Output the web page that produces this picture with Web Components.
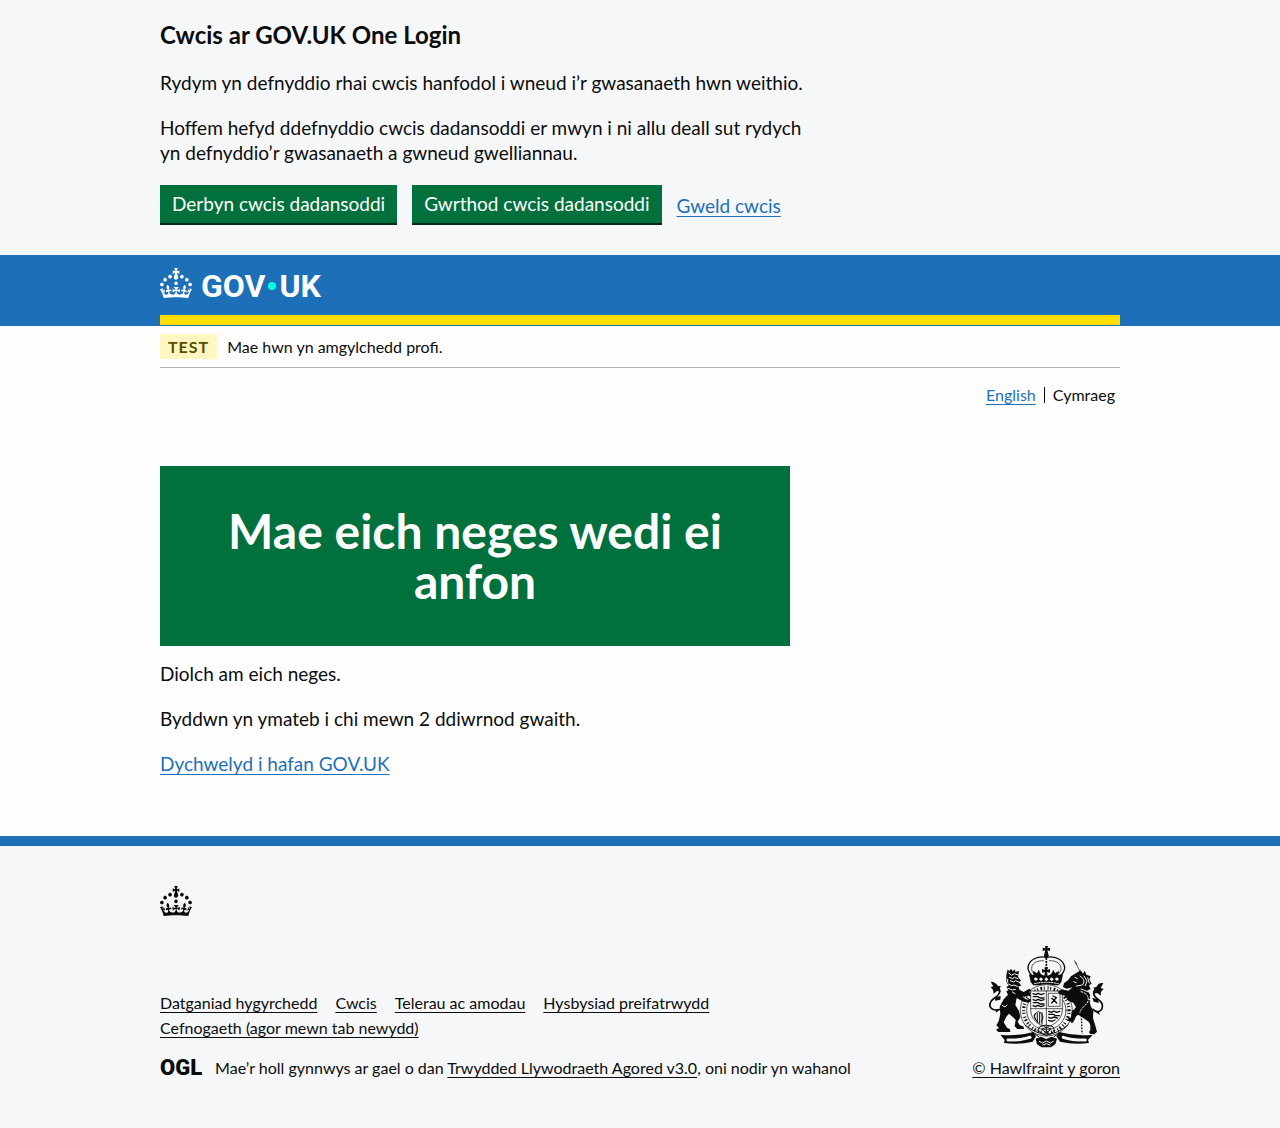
<!DOCTYPE html>
<html lang="cy">
<head>
<meta charset="utf-8">
<meta name="viewport" content="width=device-width, initial-scale=1">
<title>Mae eich neges wedi ei anfon</title>
<style>
  :root {
    --blue: #1d70b8;
    --green: #00703c;
    --ink: #0b0c0c;
    --surface: #f6f7f8;
  }
  body {
    margin: 0;
    color: var(--ink);
    background: #fefefe;
    font-family: Lato, "Liberation Sans", sans-serif;
    font-size: 19px;
    line-height: 25px;
  }
</style>
</head>
<body>
<cookie-banner></cookie-banner>
<site-header></site-header>
<page-width>
  <phase-banner tag="TEST">Mae hwn yn amgylchedd profi.</phase-banner>
  <language-select></language-select>
  <page-main>
    <confirm-panel>Mae eich neges wedi ei anfon</confirm-panel>
    <body-text>Diolch am eich neges.</body-text>
    <body-text>Byddwn yn ymateb i chi mewn 2 ddiwrnod gwaith.</body-text>
    <body-text><text-link href="#hafan">Dychwelyd i hafan GOV.UK</text-link></body-text>
  </page-main>
</page-width>
<site-footer></site-footer>

<script>
  function define(name, html) {
    const template = document.createElement('template');
    template.innerHTML = html;
    customElements.define(name, class extends HTMLElement {
      constructor() {
        super();
        this.attachShadow({ mode: 'open' }).append(template.content.cloneNode(true));
      }
      connectedCallback() {
        const link = this.shadowRoot.querySelector('a[data-link]');
        if (link) link.href = this.getAttribute('href') || '#';
        const tag = this.shadowRoot.querySelector('[data-tag]');
        if (tag) tag.textContent = this.getAttribute('tag');
      }
    });
  }

  define('page-width', `
    <style>
      :host { display: block; max-width: 960px; margin: 0 auto; }
      @media (max-width: 1020px) { :host { margin: 0 30px; } }
    </style><slot></slot>`);

  define('text-link', `
    <style>
      :host { display: inline; }
      a { color: var(--link, var(--blue)); text-decoration: underline; text-decoration-thickness: 1px; text-underline-offset: 3px; }
      a:hover { text-decoration-thickness: 3px; }
    </style><a data-link><slot></slot></a>`);

  define('body-text', `
    <style>:host { display: block; margin-bottom: 20px; }</style><slot></slot>`);

  define('action-button', `
    <style>
      :host { display: block; }
      button { display: block; font: inherit; line-height: 22px; color: #fff; background: var(--green); border: 0; border-radius: 0; padding: 8px 12px; margin: 0 0 2px; box-shadow: 0 2px 0 #002d18; cursor: pointer; }
    </style><button type="button"><slot></slot></button>`);

  define('crown-icon', `
    <style>:host { display: block; } svg { display: block; fill: currentColor; }</style>
    <svg width="32" height="30" viewBox="0 0 32 30" aria-hidden="true"><path d="M22.6 10.4c-1 .4-2-.1-2.4-1-.4-.9.1-2 1-2.4.9-.4 2 .1 2.4 1s-.1 2-1 2.4m-5.9 6.7c-.9.4-2-.1-2.4-1-.4-.9.1-2 1-2.4.9-.4 2 .1 2.4 1s-.1 2-1 2.4m10.8-3.7c-1 .4-2-.1-2.4-1-.4-.9.1-2 1-2.4.9-.4 2 .1 2.4 1s0 2-1 2.4m3.3 4.8c-1 .4-2-.1-2.4-1-.4-.9.1-2 1-2.4.9-.4 2 .1 2.4 1s-.1 2-1 2.4M17 4.7l2.3 1.2V2.5l-2.3.7-.2-.2.9-3h-3.4l.9 3-.2.2c-.1.1-2.3-.7-2.3-.7v3.4L15 4.7c.1.1.1.2.2.2l-1.3 4c-.1.2-.1.4-.1.6 0 1.1.8 2 1.9 2.2h.7c1-.2 1.9-1.1 1.9-2.1 0-.2 0-.4-.1-.6l-1.3-4c-.1-.2 0-.2.1-.3m-7.6 5.7c.9.4 2-.1 2.4-1 .4-.9-.1-2-1-2.4-.9-.4-2 .1-2.4 1s0 2 1 2.4m-5 3c.9.4 2-.1 2.4-1 .4-.9-.1-2-1-2.4-.9-.4-2 .1-2.4 1s.1 2 1 2.4m-3.2 4.8c.9.4 2-.1 2.4-1 .4-.9-.1-2-1-2.4-.9-.4-2 .1-2.4 1s0 2 1 2.4m14.8 11c4.4 0 8.6.3 12.3.8 1.1-4.5 2.4-7 3.7-8.8l-2.5-.9c.2 1.3.3 1.9 0 2.7-.4-.4-.8-1.1-1.1-2.3l-1.2 4c.7-.5 1.3-.8 2-.9-1.1 2.5-2.6 3.1-3.5 3-1.1-.2-1.7-1.2-1.5-2.1.3-1.2 1.5-1.5 2.1-.1 1.1-2.3-.8-3-2-2.3 1.9-1.9 2.1-3.5.6-5.6-2.1 1.6-2.1 3.2-1.2 5.5-1.2-1.4-3.2-.6-2.5 1.6.9-1.4 2.1-.5 1.9.8-.2 1.1-1.7 2.1-3.5 1.9-2.7-.2-2.9-2.1-2.9-3.6.7-.1 1.9.5 2.9 1.9l.4-4.3c-1.1 1.1-2.1 1.4-3.2 1.4.4-1.2 2.1-3 2.1-3h-5.4s1.7 1.9 2.1 3c-1.1 0-2.1-.2-3.2-1.4l.4 4.3c1-1.4 2.2-2 2.9-1.9-.1 1.5-.2 3.4-2.9 3.6-1.9.2-3.4-.8-3.5-1.9-.2-1.3 1-2.2 1.9-.8.7-2.3-1.2-3-2.5-1.6.9-2.2.9-3.9-1.2-5.5-1.5 2-1.3 3.7.6 5.6-1.2-.7-3.1 0-2 2.3.6-1.4 1.8-1.1 2.1.1.2.9-.3 1.9-1.5 2.1-.9.2-2.4-.5-3.5-3 .6 0 1.2.3 2 .9l-1.2-4c-.3 1.1-.7 1.9-1.1 2.3-.3-.8-.2-1.4 0-2.7l-2.9.9C1.3 23 2.6 25.5 3.7 30c3.7-.5 7.9-.8 12.3-.8"/></svg>`);

  define('royal-arms', `
    <style>
      :host { display: block; }
      svg { display: block; }
      .line { fill: none; stroke: #0b0c0c; stroke-linecap: round; stroke-linejoin: round; }
      .flat { fill: none; stroke: #0b0c0c; }
      .pale { fill: none; stroke: #f6f7f8; stroke-linecap: round; }
    </style>
    <svg width="118" height="102" viewBox="41 32 354 306" fill="#0b0c0c" aria-hidden="true">
      <!-- crown -->
      <path d="M215 32h9l-2 7 8-2v10l-8-2 3 10h-12l3-10-8 2V37l8 2z"/>
      <circle cx="219" cy="60" r="7"/>
      <path class="line" stroke-width="4" d="M219 66C195 61 166 72 164 97c0 10 6 17 12 24M219 66c24-5 53 6 55 31 0 10-6 17-12 24"/>
      <path class="line" stroke-width="2" d="M210 76c-22-1-36 10-35 24 0 8 4 11 6 15M228 76c22-1 36 10 35 24 0 8-4 11-6 15"/>
      <path class="line" stroke-width="6" stroke-dasharray="1 8" d="M219 70v35"/>
      <path d="M214 96h10l-2 8 8-3v11l-9-2 2 11 10-4 7-14 5 11 12-8-2 13 14-2-5 23-8 10h-76l-8-10-5-23 14 2-2-13 12 8 5-11 7 14 10 4 2-11-9 2v-11l8 3z"/>
      <path fill="#f6f7f8" d="M187 126l7 5-6 6-7-6zM203 126l6 6-6 6-6-6zM219 126l6 6-6 6-6-6zM235 126l6 6-6 6-6-6zM251 126l6 5-6 6-7-6z"/>
      <path class="pale" stroke-width="3" stroke-dasharray="6 4" d="M183 145q36-8 72 0"/>
      <!-- garter and shield -->
      <ellipse cx="219" cy="225" rx="79" ry="78" fill="#f6f7f8"/>
      <ellipse class="line" cx="219" cy="225" rx="78" ry="77" stroke-width="2"/>
      <ellipse class="flat" cx="219" cy="225" rx="68" ry="67" stroke-width="10" stroke-dasharray="3 5 3 7 5 5 3 9"/>
      <ellipse class="line" cx="219" cy="225" rx="59" ry="58" stroke-width="2"/>
      <path fill="#f6f7f8" stroke="#0b0c0c" stroke-width="2" d="M172 167h95v56c0 28-22 45-48 53-26-8-47-25-47-53z"/>
      <path class="line" stroke-width="2" d="M219 168v106M172 220h95"/>
      <path class="line" stroke-width="4" d="M179 175l8 3 7-4 9 4 9-3M180 184h15l5 4h12M179 193l8 3 7-4 9 4 9-3M180 202h15l5 4h12M179 211l8 3 7-4 9 4 9-3"/>
      <path class="line" stroke-width="2" d="M226 174h34v39h-34z"/>
      <path class="line" stroke-width="4" d="M239 182l10 5-7 7 8 9M235 203l7-8-7-6"/>
      <path class="line" stroke-width="3" d="M192 230c-12 7-11 20 3 31M196 229c14 5 16 18 8 30M192 234v27M199 233v31M206 232v35M184 236c-4 7 1 16 7 22"/>
      <path class="line" stroke-width="4" d="M226 228l8 3 7-4 9 4 9-3M226 237h15l5 4h12M226 246l8 3 7-4 11 3M226 255l9 3 10-4"/>
      <path class="line" stroke-width="3" d="M200 274q19-9 38 0l7 13-25 14-26-14zM206 281l14-5 13 5-13 11zM219 277v18"/>
      <!-- lion -->
      <path d="M99 119l4-17 5 6 5-8 5 8 7-6 1 8 11-3-3 17 9 12-7 5 8 10-9 2 4 11 12 6 17-10 6 6-8 4 8 3-7 6-20 6 14 8 10-3 2 8-8 4-15-3-20-11-4 21 11 18 4 18-8 14 6 10 12 5 1 7h-20l-8-8 3-20-20-18-8 9-8 17 10 16 9 5 1 8H75l-7-7 9-5-8-8 7-12 5-22-2-22 12-22 13-14-5-10 6-3-6-11 7-2-7-13z"/>
      <path class="pale" stroke-width="3" d="M106 113l9 7 8-5 11 4M108 126l10 4 5-4 11 4M111 136l10 4 6-4 9 4M105 146l10 5 7-2 10 4M104 159l13 5 9-2M103 132v9M117 170l8 5M87 210l8 5 6-6"/>
      <path class="line" stroke-width="5" d="M85 220C58 231 43 216 53 198c9-14 27-13 26-32-1-9-6-13-13-12"/>
      <path d="M52 139c10 0 17 5 22 13l9 1-6 7 6 9-12-2-10 8-2-12-7-7 8-3zM66 186l16-4-1 11-16 3z"/>
      <path d="M80 223l-13 9 2-11zM153 178l11-3 2 7-10 2z"/>
      <!-- unicorn -->
      <path class="line" stroke-width="2" d="M303 76l23 43M307 80l3 6"/>
      <path d="M322 105l7 10 5-9 5 12 13 5-4 9 7 13-8 5 5 12-10 3 9 15-5 9 6 22 8 17-1 21 7 22 5 18-8 8-14-2-2-6 10-7-10-22-17-12-15-10-10 6-10 16-12-4 1-7 9-2 2-17 13-14-8-14-14-4-11-17-16-4-6-8 12-7 20 4 13-10-18 4-11-5 3-11 12-9 9-12z"/>
      <path class="pale" stroke-width="3" d="M305 126l7 4M320 122c14 9 14 20 7 27l-18 3M332 122l9 15-5 14M343 127l5 16M323 161l20 8M301 139l8 3"/>
      <path class="flat" stroke-width="4" stroke-dasharray="5 4" d="M321 165c18 4 28 12 28 29-1 17-26 21-25 42l2 60"/>
      <path class="pale" stroke-width="3" stroke-dasharray="5 5" d="M323 169c16 4 22 13 22 25-1 13-22 22-25 37"/>
      <path class="line" stroke-width="5" d="M359 222c15 15 30 4 28-14-3-17-25-17-26-33-1-11 8-18 17-15"/>
      <path d="M390 143c-12-1-17 4-21 12l-9 2 6 8-7 10 13-2 10 8 1-12 8-8-9-3zM373 192l-16-5 4 12 16 4zM363 228l17 11-5-13z"/>
      <path class="line" stroke-width="5" d="M307 239c-4 12-6 16-11 22M344 240l10 28-1 20"/>
      <!-- scrolls and flowers -->
      <path d="M81 298q48 6 99-8l8 13-10 16q-43 10-86 4l2-9zM358 298q-48 6-101-8l-8 13 11 16q42 10 87 4l-3-9z"/>
      <path class="pale" stroke-width="9" stroke-dasharray="3 4 5 4" stroke-linecap="butt" d="M104 314q35 2 68-9M336 314q-36 2-69-9"/>
      <path class="line" stroke-width="3" d="M155 269q29 24 64 30 36-5 65-30M178 291l18 13M260 291l-18 13"/>
      <path d="M187 310l16-6 16 7 16-7 16 6-5 17-13 9h-28l-14-9z"/>
      <path class="pale" stroke-width="3" d="M198 318l9 5 12-6 12 6 9-5M208 329l11-4 11 4"/>
    </svg>`);

  define('gov-logo', `
    <style>
      :host { display: block; }
      a { display: flex; width: max-content; align-items: center; gap: 9px; color: #fff; text-decoration: none; }
      .word { display: flex; align-items: center; font: bold 32px/30px Roboto, sans-serif; padding-top: 6px; }
      .dot { width: 8px; height: 8px; border-radius: 50%; background: #00ffe0; margin: 0 3px; }
    </style>
    <a href="#gov" aria-label="GOV.UK"><crown-icon></crown-icon><span class="word"><span>GOV</span><span class="dot"></span><span>UK</span></span></a>`);

  define('cookie-banner', `
    <style>
      :host { display: block; background: var(--surface); padding: 20px 0 30px; }
      h2 { margin: 0 0 20px; font-size: 24px; line-height: 30px; }
      .copy { max-width: 660px; }
      .actions { display: flex; flex-wrap: wrap; align-items: center; gap: 15px; }
    </style>
    <page-width>
      <div class="copy">
        <h2>Cwcis ar GOV.UK One Login</h2>
        <body-text>Rydym yn defnyddio rhai cwcis hanfodol i wneud i’r gwasanaeth hwn weithio.</body-text>
        <body-text>Hoffem hefyd ddefnyddio cwcis dadansoddi er mwyn i ni allu deall sut rydych yn defnyddio’r gwasanaeth a gwneud gwelliannau.</body-text>
      </div>
      <div class="actions">
        <action-button>Derbyn cwcis dadansoddi</action-button>
        <action-button>Gwrthod cwcis dadansoddi</action-button>
        <text-link href="#cwcis">Gweld cwcis</text-link>
      </div>
    </page-width>`);

  define('site-header', `
    <style>
      :host { display: block; background: var(--blue); padding-bottom: 1px; }
      header { padding-top: 10px; border-bottom: 10px solid #ffdd00; }
      gov-logo { padding-bottom: 14px; }
    </style>
    <page-width><header><gov-logo></gov-logo></header></page-width>`);

  define('phase-banner', `
    <style>
      :host { display: flex; align-items: center; gap: 10px; padding: 8px 0; border-bottom: 1px solid #b1b4b6; font-size: 16px; }
      strong { background: #fff7bf; color: #594d00; letter-spacing: 1px; padding: 0 8px; }
    </style>
    <strong data-tag></strong><span><slot></slot></span>`);

  define('language-select', `
    <style>
      :host { display: block; font-size: 16px; line-height: 16px; padding: 19px 5px 0 0; }
      ul { display: flex; justify-content: flex-end; gap: 8px; list-style: none; margin: 0; padding: 0; }
      li + li { border-left: 1px solid var(--ink); padding-left: 8px; }
    </style>
    <nav aria-label="Dewis iaith"><ul><li><text-link href="#en">English</text-link></li><li>Cymraeg</li></ul></nav>`);

  define('page-main', `
    <style>
      :host { display: block; padding: 63px 0 40px; }
      main { max-width: 630px; }
    </style><main><slot></slot></main>`);

  define('confirm-panel', `
    <style>
      :host { display: block; background: var(--green); color: #fff; padding: 40px; margin-bottom: 15px; text-align: center; }
      h1 { font-size: 48px; line-height: 50px; margin: 0; }
    </style><h1><slot></slot></h1>`);

  define('site-footer', `
    <style>
      :host { display: block; --link: var(--ink); background: var(--surface); border-top: 10px solid var(--blue); padding: 40px 0 48px; font-size: 16px; }
      .meta { display: flex; align-items: flex-end; justify-content: space-between; gap: 30px; padding-top: 30px; }
      ul { display: flex; flex-wrap: wrap; column-gap: 18px; list-style: none; margin: 0 0 15px; padding: 0; max-width: 600px; }
      .licence { display: flex; align-items: center; gap: 13px; }
      .ogl { font: 900 22px/25px Roboto, sans-serif; }
      .crest { text-align: center; }
      royal-arms { display: flex; justify-content: center; padding-bottom: 7px; }
    </style>
    <page-width><footer>
      <crown-icon></crown-icon>
      <div class="meta">
        <div>
          <ul>
            <li><text-link href="#hygyrchedd">Datganiad hygyrchedd</text-link></li>
            <li><text-link href="#cwcis">Cwcis</text-link></li>
            <li><text-link href="#telerau">Telerau ac amodau</text-link></li>
            <li><text-link href="#preifatrwydd">Hysbysiad preifatrwydd</text-link></li>
            <li><text-link href="#cefnogaeth">Cefnogaeth (agor mewn tab newydd)</text-link></li>
          </ul>
          <div class="licence"><span class="ogl">OGL</span><span>Mae’r holl gynnwys ar gael o dan <text-link href="#ogl">Trwydded Llywodraeth Agored v3.0</text-link>, oni nodir yn wahanol</span></div>
        </div>
        <div class="crest"><royal-arms></royal-arms><text-link href="#hawlfraint">© Hawlfraint y goron</text-link></div>
      </div>
    </footer></page-width>`);
</script>
</body>
</html>
